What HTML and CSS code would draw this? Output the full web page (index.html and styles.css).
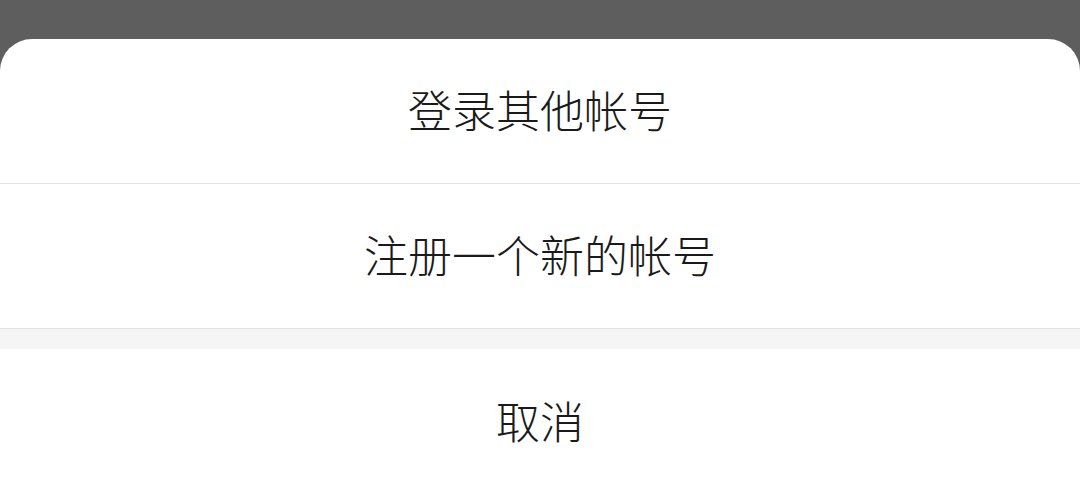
FILE: index.html
```html
<!DOCTYPE html>
<html lang="zh-CN">
<head>
<meta charset="utf-8">
<link rel="stylesheet" href="styles.css">
</head>
<body>
<div class="screen">
  <div class="sheet">
    <div class="item item-border">登录其他帐号</div>
    <div class="item item-border">注册一个新的帐号</div>
    <div class="gap"></div>
    <div class="item item-last">取消</div>
  </div>
</div>
</body>
</html>
```
FILE: styles.css
```css
html, body {
  margin: 0;
  padding: 0;
  height: 100%;
  overflow: hidden;
}
body {
  background: #5e5e5e;
  font-family: "Noto Sans CJK SC", "Noto Sans", sans-serif;
}
.screen {
  padding-top: 39px;
  height: 100%;
  box-sizing: border-box;
  display: flex;
  flex-direction: column;
}
.sheet {
  flex: 1;
  background: #ffffff;
  border-radius: 32px 32px 0 0;
  display: flex;
  flex-direction: column;
  overflow: hidden;
}
.item {
  height: 144px;
  display: flex;
  align-items: center;
  justify-content: center;
  font-size: 44px;
  color: #1a1a1a;
  font-weight: 300;
  padding-bottom: 4px;
  box-sizing: border-box;
}
.item-border {
  border-bottom: 1px solid #e3e3e3;
  height: 145px;
}
.item-last {
  flex: 1;
  height: auto;
  max-height: 150px;
}
.gap {
  height: 20px;
  background: #f5f5f5;
}
```
